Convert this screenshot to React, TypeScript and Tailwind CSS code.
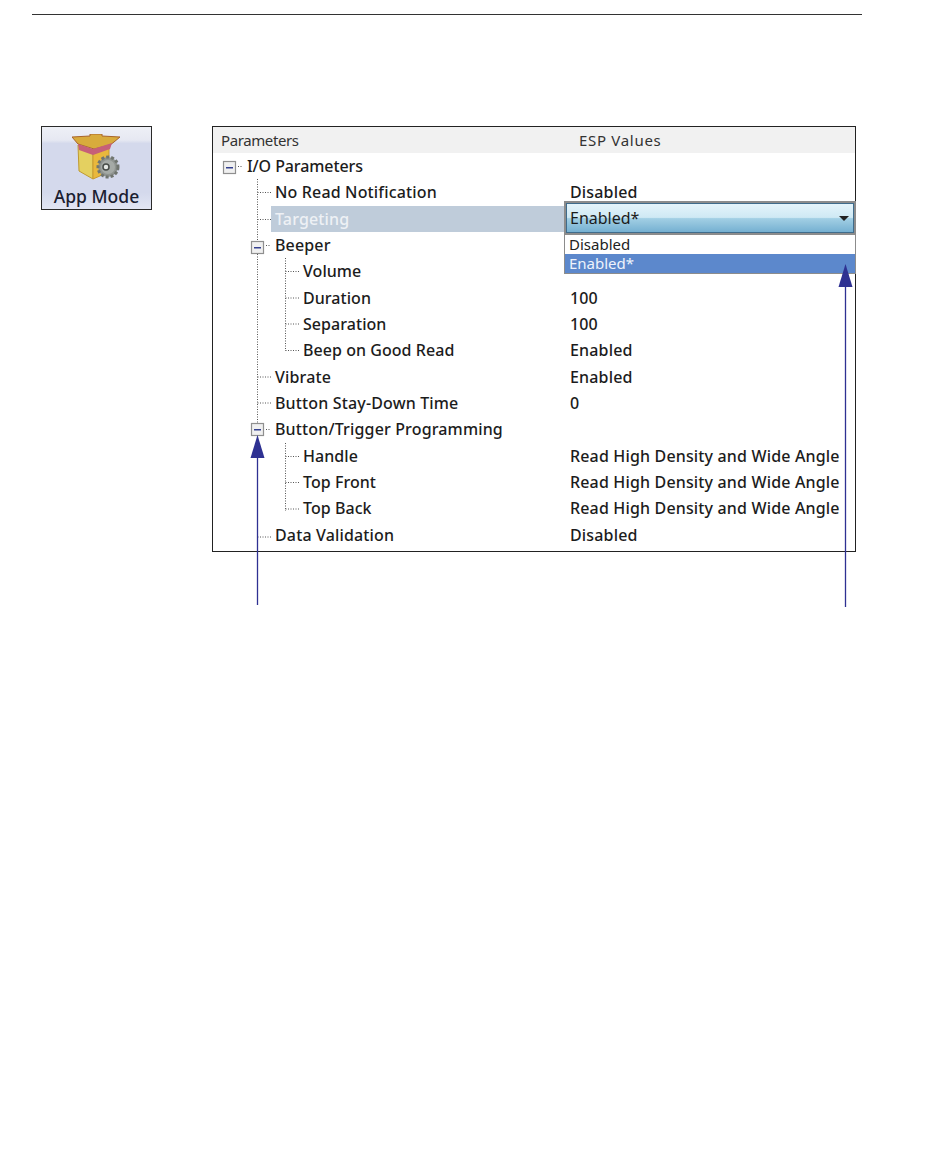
const rows = [
  { label: 'I/O Parameters', level: 0 },
  { label: 'No Read Notification', level: 1, value: 'Disabled' },
  { label: 'Targeting', level: 1, selected: true },
  { label: 'Beeper', level: 1 },
  { label: 'Volume', level: 2 },
  { label: 'Duration', level: 2, value: '100' },
  { label: 'Separation', level: 2, value: '100' },
  { label: 'Beep on Good Read', level: 2, value: 'Enabled' },
  { label: 'Vibrate', level: 1, value: 'Enabled' },
  { label: 'Button Stay-Down Time', level: 1, value: '0' },
  { label: 'Button/Trigger Programming', level: 1 },
  { label: 'Handle', level: 2, value: 'Read High Density and Wide Angle' },
  { label: 'Top Front', level: 2, value: 'Read High Density and Wide Angle' },
  { label: 'Top Back', level: 2, value: 'Read High Density and Wide Angle' },
  { label: 'Data Validation', level: 1, value: 'Disabled' },
];

const font = { fontFamily: '"Noto Sans", sans-serif' };

function AppIcon() {
  return (
    <svg width="50" height="48" viewBox="0 0 50 48">
      <path d="M0 3 L18 2 L18 0 L30 0 L30 2 L48 3 L42 8 L38 11 L22 15 L6 10 Z" fill="#d8ab3c" stroke="#a8642a" />
      <path d="M6 11 L21 16 L21 45 L7 37 Z" fill="#e4d060" stroke="#c09a30" />
      <path d="M21 16 L37 11 L37 38 L21 45 Z" fill="#e9b83c" stroke="#c99a30" />
      <path d="M6 10 L21 15 L40 9 L38 15 L21 21 L7 16 Z" fill="#c65f78" />
      <circle cx="36" cy="33" r="10" fill="#8f9490" stroke="#70756f" strokeWidth="3" strokeDasharray="3 2" />
      <circle cx="36" cy="33" r="7" fill="#a5aaa6" />
      <circle cx="34" cy="33" r="3" fill="#e4e8e4" stroke="#474c48" strokeWidth="1.5" />
    </svg>
  );
}

function Expander({ x, y }: { x: number; y: number }) {
  return (
    <g>
      <rect x={x + 0.5} y={y + 0.5} width="12" height="12" fill="#f0f0f0" stroke="#8f8f8f" strokeWidth="1.2" />
      <rect x={x + 3} y={y + 6} width="7" height="1.5" fill="#34408f" />
    </g>
  );
}

function TreeLines() {
  const dotted = { stroke: '#555', strokeDasharray: '1 1.5', strokeWidth: 1, fill: 'none' };
  return (
    <svg className="absolute left-0 top-0 pointer-events-none" width="642" height="424">
      <path d="M25 39.5 H30 M44.5 52 V408 M44.5 65.5 H58 M44.5 92.5 H58 M53 118.5 H58 M44.5 250 H58 M44.5 276 H58 M53 302.5 H58 M44.5 410 H58" {...dotted} />
      <path d="M72.5 131 V224 M72.5 144.5 H86 M72.5 171 H86 M72.5 197 H86 M72.5 223.5 H86" {...dotted} />
      <path d="M72.5 316 V384 M72.5 329.5 H86 M72.5 355.5 H86 M72.5 382 H86" {...dotted} />
      <Expander x={10} y={34} />
      <Expander x={38} y={114} />
      <Expander x={38} y={296} />
    </svg>
  );
}

function Dropdown() {
  return (
    <div className="absolute left-[351px] top-[74px] w-[292px]">
      <div className="h-[34px] border-2 border-[#8c8c8c] bg-[linear-gradient(#e6f5fb_0%,#cfe9f4_48%,#a2cfe4_52%,#72aed0_100%)] px-[4px] flex items-center justify-between shadow-[inset_0_0_0_1px_#3f6c8c] text-[16px] text-[#1c1c1c]">
        <span>Enabled*</span>
        <span className="w-0 h-0 border-x-[5px] border-x-transparent border-t-[5px] border-t-[#222] mr-[1px]" />
      </div>
      <div className="h-[39px] border border-t-0 border-[#8c8c8c] bg-white text-[15px] leading-[19px]">
        <div className="h-[19px] px-[4px] text-[#222]">Disabled</div>
        <div className="h-[19px] px-[4px] bg-[#5c88cc] text-[#eef3fb]">Enabled*</div>
      </div>
    </div>
  );
}

function ParamsTable() {
  return (
    <div className="relative w-[644px] h-[426px] border border-[#222] bg-white" style={font}>
      <div className="h-[26px] bg-[#f1f1f1] flex items-center text-[15px] text-[#333]">
        <span className="w-[366px] pl-[8px] tracking-[-0.4px]">Parameters</span>
        <span className="tracking-[0.7px]">ESP Values</span>
      </div>
      <div>
        {rows.map((row) => (
          <div key={row.label} className="flex h-[26.33px] items-center text-[16px] font-medium text-[#1c1c1c] whitespace-nowrap">
            <div className={row.level === 0 ? 'w-[357px] pl-[34px] tracking-[-0.1px]' : row.level === 1 ? 'w-[357px] pl-[62px] tracking-[0.15px]' : 'w-[357px] pl-[90px] tracking-[0.05px]'}>
              <span className={row.selected ? 'block -ml-[4px] pl-[4px] bg-[#bfccda] text-[#eef1f5] h-[26px] leading-[26px]' : ''}>{row.label}</span>
            </div>
            <span className="tracking-[0.16px]">{row.value}</span>
          </div>
        ))}
      </div>
      <TreeLines />
      <Dropdown />
    </div>
  );
}

function Arrow({ x, tip, end }: { x: number; tip: number; end: number }) {
  return (
    <g>
      <line x1={x} x2={x} y1={tip + 10} y2={end} stroke="#2e3192" strokeWidth="1.3" />
      <polygon points={`${x},${tip} ${x - 7},${tip + 23} ${x + 7},${tip + 23}`} fill="#2e3192" />
    </g>
  );
}

export default function App() {
  return (
    <div className="relative w-[950px] h-[1172px] bg-white overflow-hidden">
      <div className="ml-[32px] mt-[14px] w-[830px] h-px bg-[#333]" />
      <div className="flex items-start mt-[111px] ml-[41px] gap-[60px]">
        <div className="w-[111px] h-[84px] border border-[#2a2a2a] flex flex-col items-center bg-[linear-gradient(#eef0f6_0%,#e6e8f2_16%,#d4d9ec_20%,#d4d9ec_80%,#e2e6f4_100%)]" style={font}>
          <div className="h-[51px] mt-[7px] shrink-0"><AppIcon /></div>
          <div className="text-[17.5px] font-medium leading-[22px] text-[#1b2030]">App Mode</div>
        </div>
        <ParamsTable />
      </div>
      <svg className="absolute left-0 top-0 pointer-events-none" width="950" height="1172">
        <Arrow x={257.5} tip={435} end={605} />
        <Arrow x={845.5} tip={264} end={607} />
      </svg>
    </div>
  );
}
